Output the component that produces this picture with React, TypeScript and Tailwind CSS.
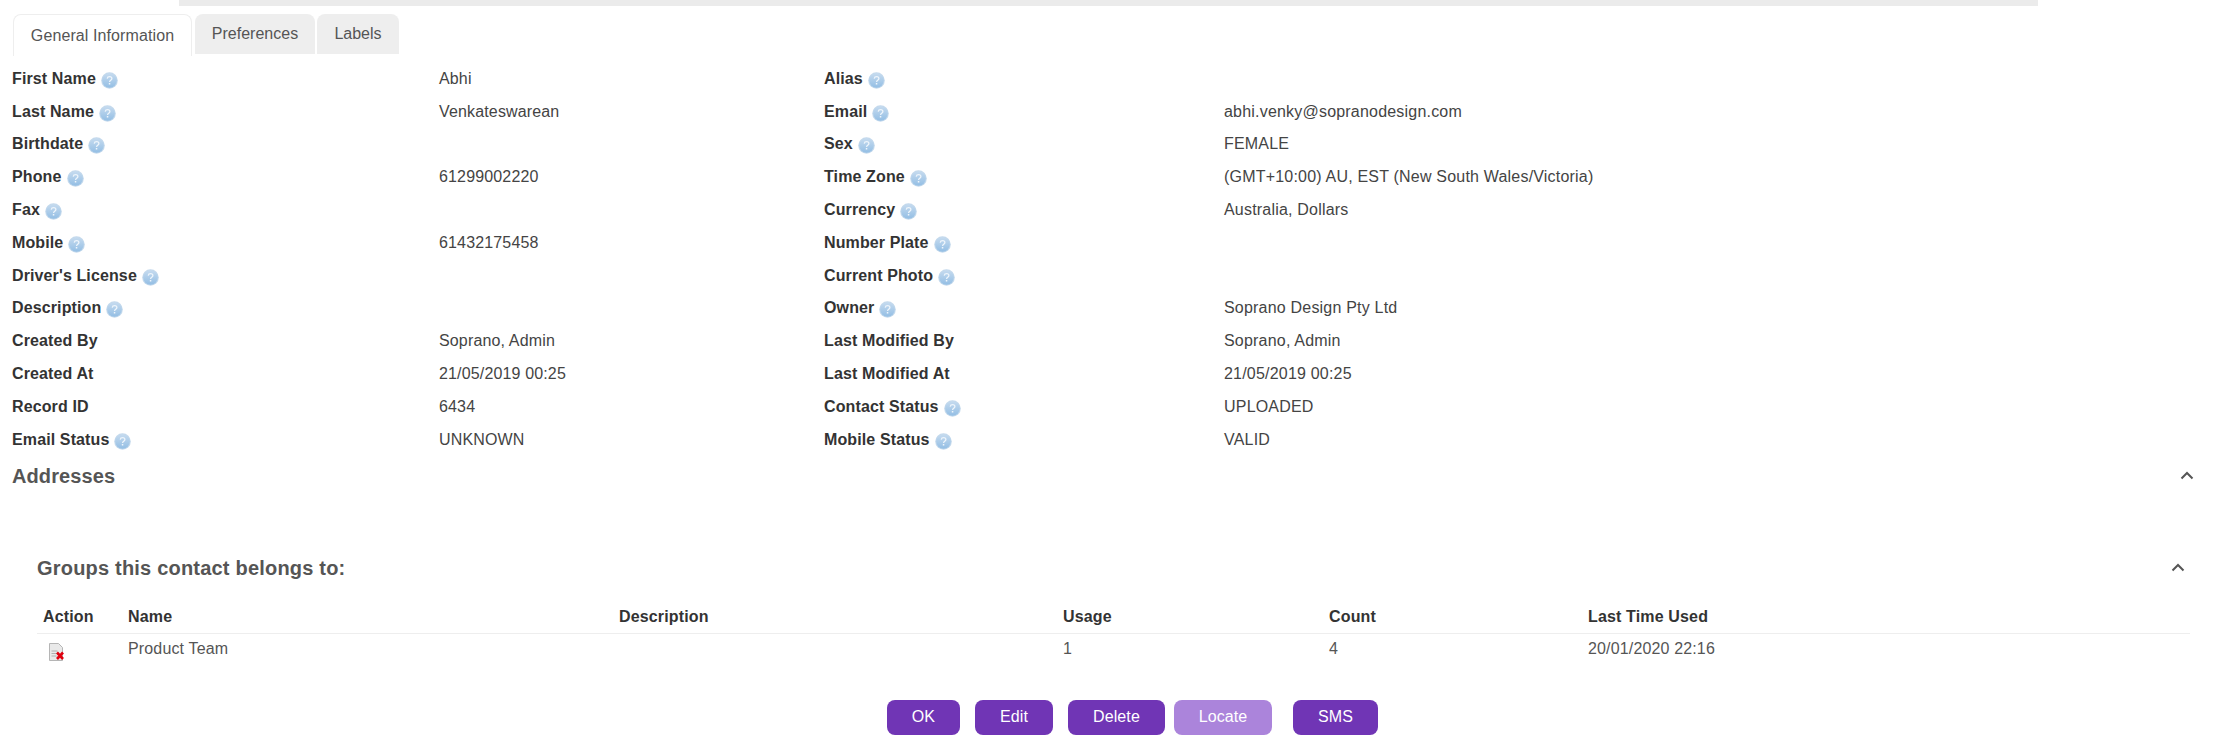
const FONT = "font-['Liberation_Sans',Arial,sans-serif]";

function Help() {
  return (
    <svg width="17" height="17" viewBox="0 0 17 17" className="ml-[5px] shrink-0 mt-[3px]">
      <defs>
        <linearGradient id="hg" x1="0" y1="0" x2="0" y2="1">
          <stop offset="0" stopColor="#c6dbef" />
          <stop offset="1" stopColor="#93bee4" />
        </linearGradient>
      </defs>
      <circle cx="8.5" cy="8.5" r="8.3" fill="#c4d9ec" />
      <circle cx="8.5" cy="8.5" r="7.3" fill="url(#hg)" />
      <path d="M6.2 6.6c.2-1.3 1.2-1.9 2.4-1.9 1.3 0 2.3.8 2.3 1.9 0 1.7-2.3 1.7-2.3 3.3" fill="none" stroke="#eef5fb" strokeWidth="1.3" />
      <rect x="7.8" y="11" width="1.5" height="1.5" fill="#eef5fb" />
    </svg>
  );
}

function Label({ text, help }: { text: string; help?: boolean }) {
  return (
    <div className="flex items-center font-bold text-[#333] tracking-[0.12px]">
      <span>{text}</span>
      {help && <Help />}
    </div>
  );
}

type Row = [string, boolean, string, string, boolean, string];
const rows: Row[] = [
  ["First Name", true, "Abhi", "Alias", true, ""],
  ["Last Name", true, "Venkateswarean", "Email", true, "abhi.venky@sopranodesign.com"],
  ["Birthdate", true, "", "Sex", true, "FEMALE"],
  ["Phone", true, "61299002220", "Time Zone", true, "(GMT+10:00) AU, EST (New South Wales/Victoria)"],
  ["Fax", true, "", "Currency", true, "Australia, Dollars"],
  ["Mobile", true, "61432175458", "Number Plate", true, ""],
  ["Driver's License", true, "", "Current Photo", true, ""],
  ["Description", true, "", "Owner", true, "Soprano Design Pty Ltd"],
  ["Created By", false, "Soprano, Admin", "Last Modified By", false, "Soprano, Admin"],
  ["Created At", false, "21/05/2019 00:25", "Last Modified At", false, "21/05/2019 00:25"],
  ["Record ID", false, "6434", "Contact Status", true, "UPLOADED"],
  ["Email Status", true, "UNKNOWN", "Mobile Status", true, "VALID"],
];

function Chevron() {
  return (
    <svg width="14" height="9" viewBox="0 0 14 9">
      <path d="M1.5 7.5 7 2l5.5 5.5" fill="none" stroke="#555" strokeWidth="2" />
    </svg>
  );
}

function DocX() {
  return (
    <svg width="15" height="18" viewBox="0 0 15 18">
      <path d="M0.5 0.5h9l4 4v13h-13z" fill="#e9e9e9" stroke="#b5b5b5" />
      <path d="M2.5 8h6M2.5 10.5h5M2.5 13h5" stroke="#b0b0b0" />
      <path d="M8 9.5l6 6.5M14 9.5l-6 6.5" stroke="#e0000f" strokeWidth="2.6" />
    </svg>
  );
}

function Btn({ children, w, light }: { children: string; w: string; light?: boolean }) {
  return (
    <button className={`${w} h-[35px] rounded-[8px] text-white text-[16px] tracking-[0.1px] ${light ? "bg-[#ab84db]" : "bg-[#7035b5]"}`}>
      {children}
    </button>
  );
}

export default function App() {
  return (
    <div className={`${FONT} w-[2218px] h-[742px] overflow-hidden bg-white text-[16px] text-[#444]`}>
      <div className="ml-[179px] w-[1859px] h-[6px] bg-[#ebebeb]" />
      <div className="flex items-start pl-[13px] pt-[8px] h-[50px]">
        <div className="w-[179px] h-[42px] rounded-t-[8px] border border-b-0 border-[#eeeeee] bg-white flex items-center justify-center text-[16px] text-[#555] tracking-[0.1px]">
          General Information
        </div>
        <div className="ml-[3px] w-[120px] h-[40px] rounded-t-[8px] bg-[#eeeeee] flex items-center justify-center text-[#555]">
          Preferences
        </div>
        <div className="ml-[2px] w-[82px] h-[40px] rounded-t-[8px] bg-[#eeeeee] flex items-center justify-center text-[#555]">
          Labels
        </div>
      </div>
      <div className="pl-[12px] pt-[6.5px]">
        {rows.map((r) => (
          <div key={r[0]} className="grid grid-cols-[427px_385px_400px_1fr] h-[32.8px] items-center">
            <Label text={r[0]} help={r[1]} />
            <div className="tracking-[0.15px]">{r[2]}</div>
            <Label text={r[3]} help={r[4]} />
            <div className="tracking-[0.2px]">{r[5]}</div>
          </div>
        ))}
      </div>
      <div className="flex items-center justify-between pl-[12px] pr-[24px] h-[30px] mt-[4.5px]">
        <div className="text-[20px] font-bold text-[#555] tracking-[0.1px]">Addresses</div>
        <Chevron />
      </div>
      <div className="flex items-center justify-between pl-[37px] pr-[33px] h-[30px] mt-[62px]">
        <div className="text-[20px] font-bold text-[#555] tracking-[0.2px]">Groups this contact belongs to:</div>
        <Chevron />
      </div>
      <div className="ml-[37px] mr-[28px] mt-[18px]">
        <div className="grid grid-cols-[85px_491px_444px_266px_259px_1fr] h-[33px] items-center font-bold text-[#333] border-b border-[#eeeeee] pl-[6px] tracking-[0.15px]">
          <div>Action</div>
          <div>Name</div>
          <div>Description</div>
          <div>Usage</div>
          <div>Count</div>
          <div>Last Time Used</div>
        </div>
        <div className="grid grid-cols-[85px_491px_444px_266px_259px_1fr] h-[31px] items-center pl-[6px] text-[#555] tracking-[0.15px]">
          <div className="pl-[6px] pt-[6px]"><DocX /></div>
          <div>Product Team</div>
          <div />
          <div>1</div>
          <div>4</div>
          <div>20/01/2020 22:16</div>
        </div>
      </div>
      <div className="flex ml-[887px] mt-[35px]">
        <Btn w="w-[73px]">OK</Btn>
        <div className="w-[15px]" />
        <Btn w="w-[78px]">Edit</Btn>
        <div className="w-[15px]" />
        <Btn w="w-[97px]">Delete</Btn>
        <div className="w-[9px]" />
        <Btn w="w-[98px]" light>Locate</Btn>
        <div className="w-[21px]" />
        <Btn w="w-[85px]">SMS</Btn>
      </div>
    </div>
  );
}
